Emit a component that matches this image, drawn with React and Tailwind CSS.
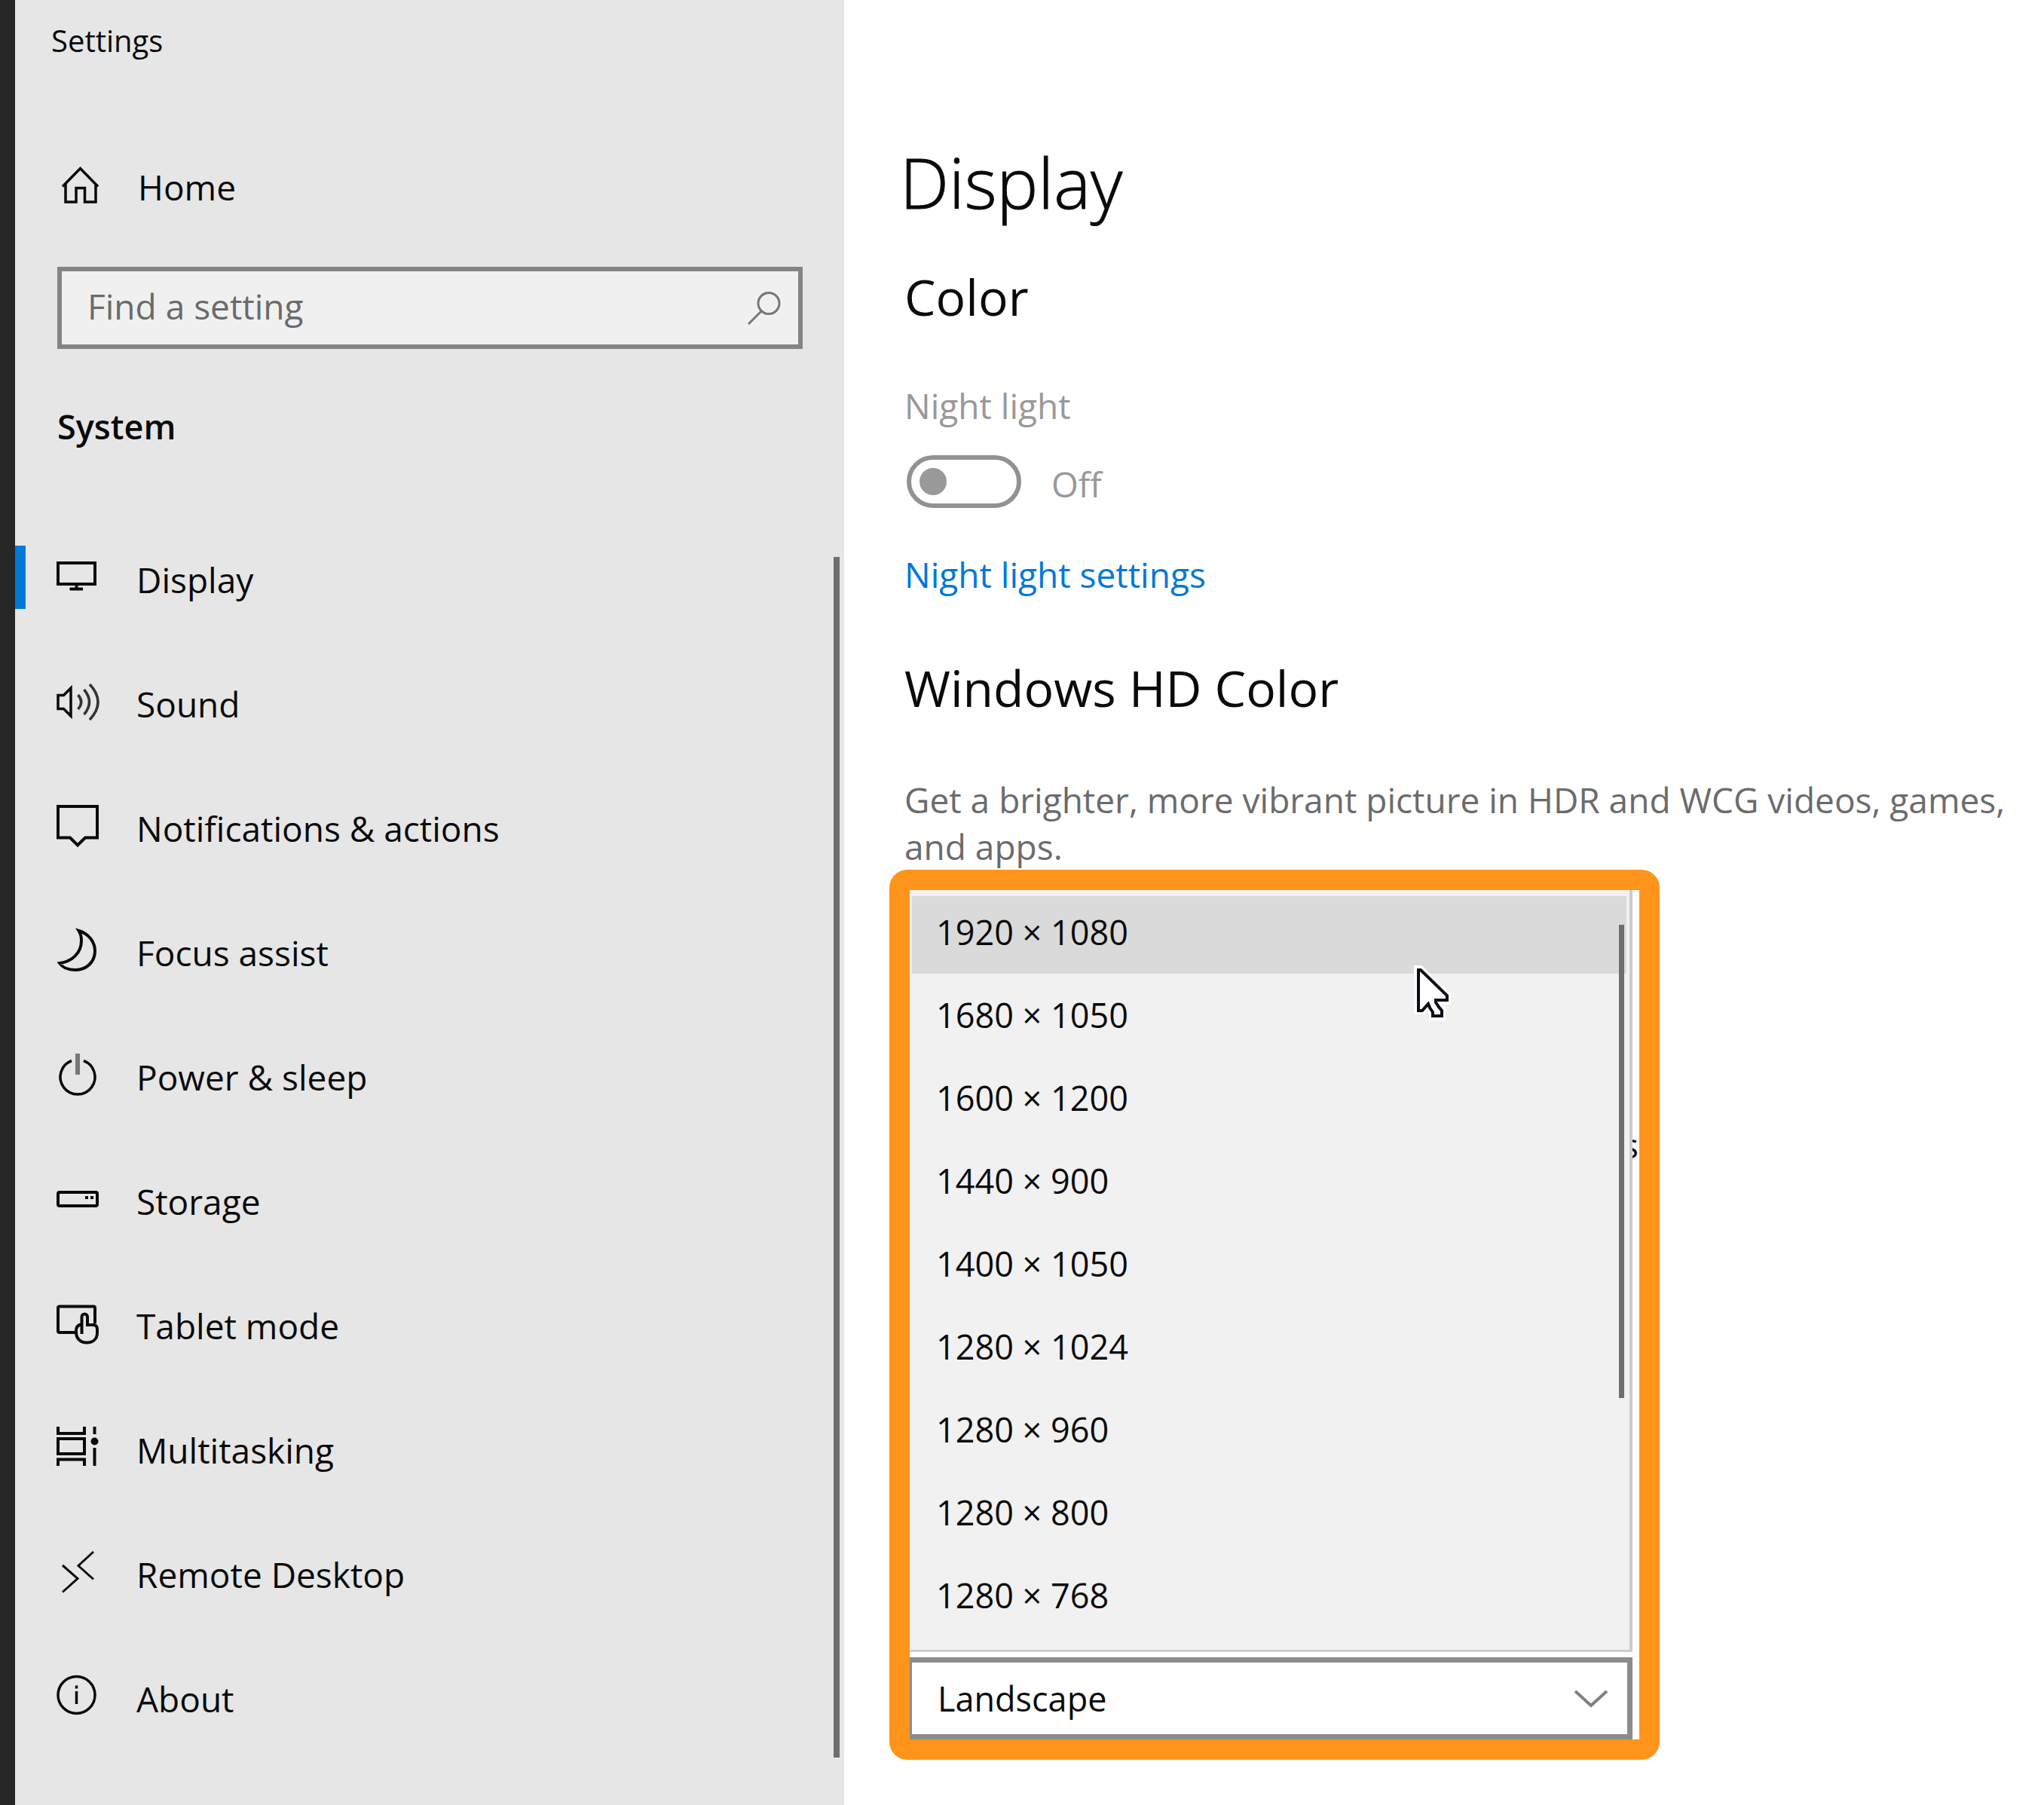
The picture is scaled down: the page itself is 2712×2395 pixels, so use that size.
import React from "react";

const svgBase = "h-[88px] w-[60px] shrink-0";

function Icon({ children, width = 4 }) {
  return (
    <svg
      className={svgBase}
      viewBox="0 0 60 88"
      fill="none"
      stroke="currentColor"
      strokeWidth={width}
      aria-hidden="true"
    >
      {children}
    </svg>
  );
}

const HomeIcon = () => (
  <Icon width={3.5}>
    <path d="M8 44.5 31.5 20.500 55 44.500" />
    <path d="M12 41V65H26V46.500H37.500V65H52V41" />
  </Icon>
);

const DisplayIcon = () => (
  <Icon>
    <path d="M2 23H51V51H2ZM26.500 51V57M17.500 57.500H35" />
  </Icon>
);

const SoundIcon = () => (
  <Icon width={3.5}>
    <path d="M2 33.500H9.500L19 24V61L9.500 51.500H2Z" />
    <path d="M28.500 33Q37 42.500 28.500 52M36.500 26Q50.500 42.500 36.500 59M44 19Q66 42.500 44 66" stroke="#333" />
  </Icon>
);

const NotificationsIcon = () => (
  <Icon>
    <path d="M2 16H54V57.500H38L28 67.500 18 57.500H2Z" />
  </Icon>
);

const FocusIcon = () => (
  <Icon>
    <path d="M29.500 16C43 20 51 31 51 43 51 57 40 68 25 68 15 68 8 65 4 59 20 57 33 46 33 29 33 24 32 20 29.500 16Z" />
  </Icon>
);

const PowerIcon = () => (
  <Icon width={3.5}>
    <path d="M20 23.500A23 23 0 1 0 36 23.500" />
    <path d="M28 14V42" stroke="#777" strokeWidth="6" />
  </Icon>
);

const StorageIcon = () => (
  <Icon>
    <rect x="2" y="33" width="52" height="18" rx="2" />
    <path d="M38 40H42M45 40H49" />
  </Icon>
);

const TabletIcon = () => (
  <Icon>
    <path d="M24 54H4Q2 54 2 52V21.500Q2 19.500 4 19.500H49Q51 19.500 51 21.500V42" />
    <path d="M33.500 56V33.500C33.500 28 41 28 41 33.500V44H50Q54 45 54 50V54C54 63 48 67.500 40 67.500 32 67.500 26 62 26 54V51Q26 45 33 43" />
  </Icon>
);

const MultitaskingIcon = () => (
  <Icon>
    <path d="M2 14V23H37V14M2 66V57.500H37V66M2 30H37V50H2ZM50.500 14V24M50.500 42V66" />
    <circle cx="50.5" cy="33.5" r="5" fill="currentColor" stroke="none" />
  </Icon>
);

const RemoteIcon = () => (
  <Icon width={3}>
    <path d="M8 33 28 50.500 8 68.500M49 15 29 33.500 49 51.500" />
  </Icon>
);

const AboutIcon = () => (
  <Icon width={3.5}>
    <circle cx="26.500" cy="40" r="24.500" />
    <path d="M26.500 27.500V31.500M26.500 35V52" />
  </Icon>
);

const navItems = [
  { label: "Display", icon: DisplayIcon, active: true },
  { label: "Sound", icon: SoundIcon },
  { label: "Notifications & actions", icon: NotificationsIcon },
  { label: "Focus assist", icon: FocusIcon },
  { label: "Power & sleep", icon: PowerIcon },
  { label: "Storage", icon: StorageIcon },
  { label: "Tablet mode", icon: TabletIcon },
  { label: "Multitasking", icon: MultitaskingIcon },
  { label: "Remote Desktop", icon: RemoteIcon },
  { label: "About", icon: AboutIcon },
];

const resolutions = [
  "1920 × 1080",
  "1680 × 1050",
  "1600 × 1200",
  "1440 × 900",
  "1400 × 1050",
  "1280 × 1024",
  "1280 × 960",
  "1280 × 800",
  "1280 × 768",
];

function Sidebar() {
  return (
    <aside className="flex w-[1120px] shrink-0 flex-col border-l-20 border-[#262626] bg-[#e6e6e6]">
      <div className="mt-[22px] pl-12 text-[40px] leading-[64px]">Settings</div>

      <a href="#home" className="mt-[117px] flex h-[88px] items-center gap-12 pl-[55px]">
        <HomeIcon />
        <span className="pt-0.5">Home</span>
      </a>

      <div className="mt-[63px] mr-[55px] ml-14 flex h-[109px] items-center border-6 border-[#848484] bg-[#f0f0f0] pr-[22px] pl-[34px]">
        <input
          type="text"
          aria-label="Find a setting"
          placeholder="Find a setting"
          className="min-w-0 flex-1 bg-transparent pb-1.5 outline-none placeholder:text-[#6a6a6a]"
        />
        <button type="button" aria-label="Search">
          <svg className="block size-[46px]" viewBox="0 0 46 46" fill="none" stroke="#777" strokeWidth="3" aria-hidden="true">
            <circle cx="29" cy="16.500" r="14" />
            <path d="M19 27 2 44" />
          </svg>
        </button>
      </div>

      <h2 className="mt-[71px] pl-14 text-[45px] font-semibold leading-[64px]">System</h2>

      <nav aria-label="System" className="mt-[126px] flex flex-1 justify-between">
        <ul className="flex flex-col gap-[77px]">
          {navItems.map(({ label, icon: Glyph, active }) => (
            <li key={label}>
              <a
                href={`#${label}`}
                aria-current={active ? "page" : undefined}
                className="flex h-[88px] items-center"
              >
                <span className={active ? "h-[84px] w-3.5 self-start bg-[#0078d7]" : "w-3.5"} />
                <span className="ml-[41px]">
                  <Glyph />
                </span>
                <span className="ml-[46px] pt-0.5">{label}</span>
              </a>
            </li>
          ))}
        </ul>
        <div className="mt-[15px] mr-1.5 mb-[63px] w-2 bg-[#6e6e6e]" />
      </nav>
    </aside>
  );
}

function ResolutionPicker() {
  return (
    <div className="relative w-[1022px] rounded-[24px] border-27 border-[#ff941a] bg-white text-[45px]">
      <span className="absolute top-[308px] right-px leading-[62px]">s</span>
      <div className="relative mr-[9px] border-r-4 border-b-3 border-[#cccccc] bg-[#f1f1f1] pt-2 pr-1 pb-[17px] pl-[3px]">
        <ul role="listbox" aria-label="Resolution">
          {resolutions.map((r, i) => (
            <li
              key={r}
              role="option"
              aria-selected={i === 0}
              className={
                i === 0
                  ? "flex h-[103px] items-center bg-[#dadada] pb-[7px] pl-8"
                  : "flex h-[110px] items-center pl-8"
              }
            >
              {r}
            </li>
          ))}
        </ul>
        <div className="absolute top-[46px] right-[7px] h-[628px] w-[7px] bg-[#6e6e6e]" />
        <svg
          className="absolute top-[100px] right-[234px] h-[74px] w-[52px]"
          viewBox="0 0 52 74"
          aria-hidden="true"
        >
          <path
            d="M4 4H9L45 39V48H32L34 54 38 58V69H24V64L20 56 18 53 11 61H4Z"
            fill="none"
            stroke="#fff"
            strokeWidth="8"
          />
          <path
            d="M6 6 9 6 44 40V46H29V49L33 55 37 60V67H25V62L21 56 19 51 11 60H6Z"
            fill="#fff"
            stroke="#0b0b18"
            strokeWidth="4"
          />
        </svg>
      </div>

      <div className="relative mt-[7px] mr-[9px]">
        <select
          aria-label="Orientation"
          className="block h-[109px] w-full appearance-none border-7 border-l-3 border-[#8c8c8c] bg-white pl-[34px]"
        >
          <option>Landscape</option>
        </select>
        <svg
          className="pointer-events-none absolute top-[42px] right-[33px] h-[26px] w-[44px]"
          viewBox="0 0 44 26"
          fill="none"
          stroke="#808080"
          strokeWidth="4"
          aria-hidden="true"
        >
          <path d="M1 3 22 22 43 3" />
        </svg>
      </div>
    </div>
  );
}

export default function App() {
  return (
    <div className="flex min-h-screen bg-white font-['Open_Sans','Noto_Sans',sans-serif] text-[46px] leading-[62px] text-[#0a0a0a]">
      <Sidebar />
      <main className="min-w-0 flex-1 pt-[178px] pr-10 pl-[60px]">
        <h1 className="pl-3.5 text-[92px] font-light leading-[128px] [-webkit-text-stroke:1px_#0a0a0a]">Display</h1>
        <div className="pl-5">
          <h2 className="mt-[43px] text-[66px] leading-[88px]">Color</h2>
          <label htmlFor="night-light" className="mt-[70px] block text-[#999]">
            Night light
          </label>
          <div className="mt-[35px] flex items-start gap-[40px] pl-[3px]">
            <div className="relative h-[70px] w-[152px]">
              <input
                id="night-light"
                type="checkbox"
                role="switch"
                disabled
                className="block h-full w-full appearance-none rounded-full border-6 border-[#929292] bg-white"
              />
              <span className="pointer-events-none absolute top-[17px] left-[17px] size-9 rounded-full bg-[#999]" />
            </div>
            <span className="leading-[76px] text-[#999]">Off</span>
          </div>
          <a href="#night-light-settings" className="mt-[51px] block text-[#0078d7]">
            Night light settings
          </a>
          <h2 className="mt-[75px] text-[66px] leading-[88px]">Windows HD Color</h2>
          <p className="mt-[74px] text-[#6b6b6b]">
            Get a brighter, more vibrant picture in HDR and WCG videos, games, and apps.
          </p>
        </div>
        <ResolutionPicker />
      </main>
    </div>
  );
}
